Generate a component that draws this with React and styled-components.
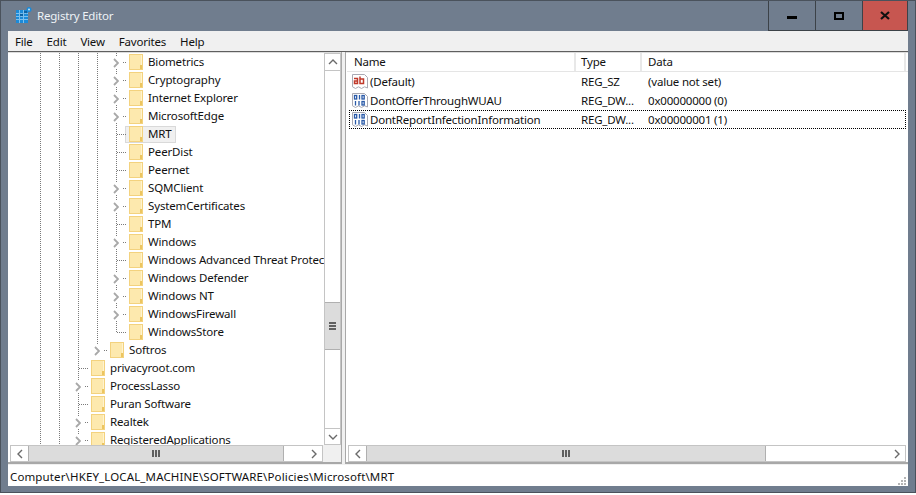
import React from 'react'
import styled, { createGlobalStyle } from 'styled-components'

const treeRows = [
  { label: 'Biometrics', depth: 4, expander: true },
  { label: 'Cryptography', depth: 4, expander: true },
  { label: 'Internet Explorer', depth: 4, expander: true },
  { label: 'MicrosoftEdge', depth: 4, expander: true },
  { label: 'MRT', depth: 4, selected: true },
  { label: 'PeerDist', depth: 4 },
  { label: 'Peernet', depth: 4 },
  { label: 'SQMClient', depth: 4, expander: true },
  { label: 'SystemCertificates', depth: 4, expander: true },
  { label: 'TPM', depth: 4 },
  { label: 'Windows', depth: 4, expander: true },
  { label: 'Windows Advanced Threat Protection', depth: 4 },
  { label: 'Windows Defender', depth: 4, expander: true },
  { label: 'Windows NT', depth: 4, expander: true },
  { label: 'WindowsFirewall', depth: 4, expander: true },
  { label: 'WindowsStore', depth: 4, last: true },
  { label: 'Softros', depth: 3, expander: true, last: true },
  { label: 'privacyroot.com', depth: 2 },
  { label: 'ProcessLasso', depth: 2, expander: true },
  { label: 'Puran Software', depth: 2 },
  { label: 'Realtek', depth: 2, expander: true },
  { label: 'RegisteredApplications', depth: 2, expander: true },
]

const values = [
  { name: '(Default)', kind: 'sz', type: 'REG_SZ', data: '(value not set)' },
  { name: 'DontOfferThroughWUAU', kind: 'bin', type: 'REG_DW...', data: '0x00000000 (0)' },
  { name: 'DontReportInfectionInformation', kind: 'bin', type: 'REG_DW...', data: '0x00000001 (1)', focused: true },
]

function Chevron({ dir, light }) {
  const points = {
    right: '1,1 5,5 1,9',
    left: '5,1 1,5 5,9',
    up: '1,5 5,1 9,5',
    down: '1,1 5,5 9,1',
  }
  const wide = dir === 'up' || dir === 'down'
  return (
    <svg width={wide ? 10 : 6} height={wide ? 6 : 10} viewBox={wide ? '0 0 10 6' : '0 0 6 10'}>
      <polyline
        points={points[dir]}
        fill="none"
        stroke={light ? '#a8a8a8' : '#6a6a6a'}
        strokeWidth={light ? 1.8 : 1.4}
      />
    </svg>
  )
}

function AppIcon() {
  return (
    <svg width="16" height="16" viewBox="0 0 16 16">
      <rect x="0" y="3" width="12" height="13" fill="#1b8ad8" />
      <path d="M3.500 3v13M7.500 3v13M0 6.500h12M0 9.500h12M0 12.500h12" stroke="#7cc0ee" strokeWidth="1" />
      <path d="M4 7l3 2M7 7l-3 2M8 4l3 2M11 4l-3 2" stroke="#0d5a96" strokeWidth="1" />
      <circle cx="13" cy="2.500" r="2.500" fill="#1b8ad8" />
      <circle cx="13" cy="2.500" r="1" fill="#bfe3f8" />
    </svg>
  )
}

function Folder() {
  return (
    <FolderIcon width="14" height="16" viewBox="0 0 14 16">
      <rect x="0" y="0" width="14" height="16" fill="#f3d27e" />
      <rect x="1" y="1" width="11" height="14" fill="#fde9ae" />
      <rect x="12" y="1" width="1" height="10" fill="#fff3cf" />
      <rect x="11" y="11" width="2" height="4" fill="#ecc560" />
    </FolderIcon>
  )
}

function ValueIcon({ kind }) {
  return (
    <ValueSvg width="16" height="16" viewBox="0 0 16 16">
      <path d="M0.500 0.500h12l3 3v10.500l-3-1.200-3 1.700-3-1.700-3 1.700-3-1.700z" fill="#fff" stroke="#a9a9b3" />
      {kind === 'sz' ? (
        <g fill="none" stroke="#c0392b" strokeWidth="1.500">
          <path d="M2 4.500h3.500v5h-3v-2.500h3" />
          <path d="M8 2.500v7h3.500v-4.500h-3.500" />
        </g>
      ) : (
        <g fill="none" stroke="#2a5aa8" strokeWidth="1.300">
          <rect x="2.500" y="2.500" width="2.200" height="3.500" />
          <path d="M7.500 2v4.500" />
          <rect x="10" y="2.500" width="2.200" height="3.500" />
          <path d="M3.500 8v4.500M7 8v4.500" />
          <rect x="10" y="8.500" width="2.200" height="3.500" />
        </g>
      )}
    </ValueSvg>
  )
}

function HBar({ thumb }) {
  return (
    <HScroll>
      <HButton><Chevron dir="left" /></HButton>
      <HTrack>
        <HThumb $w={thumb}><GripMark /></HThumb>
      </HTrack>
      <HButton><Chevron dir="right" /></HButton>
    </HScroll>
  )
}

function App() {
  return (
    <>
      <GlobalStyle />
      <Window>
        <TitleBar>
          <TitleLeft>
            <AppIcon />
            <Title>Registry Editor</Title>
          </TitleLeft>
          <Controls>
            <ControlButton><MinGlyph /></ControlButton>
            <ControlButton><MaxGlyph /></ControlButton>
            <CloseButton>
              <svg width="10" height="9" viewBox="0 0 10 9">
                <path d="M1 1l8 7M9 1l-8 7" stroke="#111" strokeWidth="2.200" />
              </svg>
            </CloseButton>
          </Controls>
        </TitleBar>
        <Client>
          <MenuBar>
            {['File', 'Edit', 'View', 'Favorites', 'Help'].map((m) => (
              <span key={m}>{m}</span>
            ))}
          </MenuBar>
          <Panes>
            <TreePane>
              <PaneBody>
                <TreeList>
                  {treeRows.map((row) => (
                    <TreeRow key={row.label}>
                      {Array.from({ length: row.depth }).map((_, i) => (
                        <Guide key={i} />
                      ))}
                      <Branch $last={row.last}>
                        <BranchTick />
                        {row.expander && (
                          <Expander><Chevron dir="right" light /></Expander>
                        )}
                      </Branch>
                      <TreeItem $selected={row.selected}>
                        <Folder />
                        <TreeLabel>{row.label}</TreeLabel>
                      </TreeItem>
                    </TreeRow>
                  ))}
                </TreeList>
                <VScroll>
                  <ScrollButton $h={18}><Chevron dir="up" /></ScrollButton>
                  <VTrack>
                    <VThumb><GripMark $vertical /></VThumb>
                  </VTrack>
                  <ScrollButton $h={17}><Chevron dir="down" /></ScrollButton>
                </VScroll>
              </PaneBody>
              <HScrollRow>
                <HBar thumb={256} />
                <Corner />
              </HScrollRow>
            </TreePane>
            <Splitter />
            <ListPane>
              <ListBody>
                <ListHeader>
                  <HeaderCell $w={229} $pad={7}>Name</HeaderCell>
                  <HeaderCell $w={66} $pad={5}>Type</HeaderCell>
                  <HeaderCell $w={264} $pad={6}>Data</HeaderCell>
                </ListHeader>
                {values.map((v) => (
                  <ValueRow key={v.name} $focused={v.focused}>
                    <NameCell>
                      <ValueIcon kind={v.kind} />
                      <ValueName>{v.name}</ValueName>
                    </NameCell>
                    <TypeCell>{v.type}</TypeCell>
                    <DataCell>{v.data}</DataCell>
                  </ValueRow>
                ))}
              </ListBody>
              <ListScrollRow>
                <HBar thumb={400} />
              </ListScrollRow>
            </ListPane>
          </Panes>
          <StatusBar>
            <StatusText>Computer\HKEY_LOCAL_MACHINE\SOFTWARE\Policies\Microsoft\MRT</StatusText>
            <ResizeGrip>
              <svg width="9" height="9" viewBox="0 0 9 9" fill="#b4b4b4">
                <rect x="6" y="0" width="2" height="2" />
                <rect x="3" y="3" width="2" height="2" />
                <rect x="6" y="3" width="2" height="2" />
                <rect x="0" y="6" width="2" height="2" />
                <rect x="3" y="6" width="2" height="2" />
                <rect x="6" y="6" width="2" height="2" />
              </svg>
            </ResizeGrip>
          </StatusBar>
        </Client>
      </Window>
    </>
  )
}

export default App

const dots = 'linear-gradient(#7a7a7a 50%, transparent 50%)'

const GlobalStyle = createGlobalStyle`
  html, body {
    margin: 0;
    padding: 0;
    background: #fff;
  }
  * {
    box-sizing: border-box;
  }
`

const Window = styled.div`
  width: 916px;
  height: 493px;
  display: flex;
  flex-direction: column;
  background: #707d8e;
  border: 1px solid #4a525c;
  padding: 0 7px 6px 7px;
  font-family: "Noto Sans", "Open Sans", sans-serif;
  font-size: 11.5px;
  letter-spacing: -0.2px;
  color: #111;
`

const TitleBar = styled.div`
  height: 30px;
  flex-shrink: 0;
  display: flex;
  justify-content: space-between;
  align-items: flex-start;
`

const TitleLeft = styled.div`
  display: flex;
  align-items: center;
  gap: 5px;
  padding: 6px 0 0 8px;
`

const Title = styled.span`
  color: #eef3f6;
`

const Controls = styled.div`
  display: flex;
  height: 30px;
  border: 1px solid #3c4248;
  border-top: none;
`

const ControlButton = styled.div`
  width: 47px;
  display: flex;
  align-items: center;
  justify-content: center;
  border-right: 1px solid #3c4248;
`

const CloseButton = styled.div`
  width: 44px;
  display: flex;
  align-items: center;
  justify-content: center;
  background: #c75650;
`

const MinGlyph = styled.div`
  width: 10px;
  height: 3px;
  margin-top: 3px;
  background: #000;
`

const MaxGlyph = styled.div`
  width: 10px;
  height: 8px;
  border: 2px solid #000;
`

const Client = styled.div`
  flex: 1;
  min-height: 0;
  display: flex;
  flex-direction: column;
  background: #f0f0f0;
`

const MenuBar = styled.div`
  height: 21px;
  flex-shrink: 0;
  display: flex;
  align-items: center;
  padding-left: 7px;
  gap: 14px;
  border-bottom: 1px solid #5f5f5f;
`

const Panes = styled.div`
  height: 412px;
  flex-shrink: 0;
  display: flex;
`

const TreePane = styled.div`
  width: 333px;
  flex-shrink: 0;
  display: flex;
  flex-direction: column;
  background: #fff;
  border-top: 1px solid #dcdcdc;
  border-bottom: 2px solid #a8a8a8;
`

const PaneBody = styled.div`
  flex: 1;
  min-height: 0;
  display: flex;
`

const TreeList = styled.div`
  flex: 1;
  min-width: 0;
  overflow: hidden;
  padding-left: 32px;
  letter-spacing: -0.15px;
`

const TreeRow = styled.div`
  height: 18px;
  display: flex;
  align-items: center;
  white-space: nowrap;
`

const Guide = styled.span`
  width: 19px;
  height: 18px;
  flex-shrink: 0;
  background: ${dots} 0 0 / 1px 2px repeat-y;
`

const Branch = styled.span`
  position: relative;
  width: 13px;
  height: 18px;
  flex-shrink: 0;
  background: ${(p) => (p.$last ? 'linear-gradient(#fff, #fff) 0 10px / 1px 8px no-repeat,' : '')} ${dots} 0 0 / 1px 2px repeat-y;
`

const BranchTick = styled.span`
  position: absolute;
  left: 1px;
  right: 2px;
  top: 9px;
  height: 1px;
  background: linear-gradient(90deg, #7a7a7a 50%, transparent 50%) 0 0 / 2px 1px repeat-x;
`

const Expander = styled.span`
  position: absolute;
  left: -3px;
  top: 4px;
  width: 10px;
  height: 11px;
  background: #fff;
  display: flex;
  align-items: center;
`

const TreeItem = styled.span`
  display: flex;
  align-items: center;
  flex-shrink: 0;
  height: 17px;
  margin-left: -4px;
  padding: 0 3px;
  border: 1px solid ${(p) => (p.$selected ? '#d9d9d9' : 'transparent')};
  background: ${(p) => (p.$selected ? '#f0f0f0' : 'transparent')};
`

const FolderIcon = styled.svg`
  flex-shrink: 0;
`

const TreeLabel = styled.span`
  margin: -2px 0 0 5px;
`

const VScroll = styled.div`
  width: 17px;
  flex-shrink: 0;
  display: flex;
  flex-direction: column;
  background: #fff;
  border-left: 1px solid #c4c4c4;
  border-right: 1px solid #c4c4c4;
`

const ScrollButton = styled.div`
  height: ${(p) => p.$h}px;
  flex-shrink: 0;
  display: flex;
  align-items: center;
  justify-content: center;
  border-top: 1px solid #c4c4c4;
  border-bottom: 1px solid #c4c4c4;
`

const VTrack = styled.div`
  flex: 1;
  padding-top: 231px;
`

const VThumb = styled.div`
  height: 48px;
  display: flex;
  align-items: center;
  justify-content: center;
  background: #dcdcdc;
  border-top: 1px solid #b0b0b0;
  border-bottom: 1px solid #b0b0b0;
`

const GripMark = styled.div`
  width: ${(p) => (p.$vertical ? 7 : 8)}px;
  height: ${(p) => (p.$vertical ? 8 : 7)}px;
  background: ${(p) =>
    p.$vertical
      ? 'repeating-linear-gradient(180deg, #606060 0 2px, transparent 2px 3px)'
      : 'repeating-linear-gradient(90deg, #606060 0 2px, transparent 2px 3px)'};
`

const HScrollRow = styled.div`
  display: flex;
  flex-shrink: 0;
  padding-left: 2px;
`

const ListScrollRow = styled.div`
  display: flex;
  flex-shrink: 0;
  padding: 0 2px;
`

const HScroll = styled.div`
  flex: 1;
  height: 17px;
  display: flex;
  border: 1px solid #c4c4c4;
  background: #fff;
`

const HButton = styled.div`
  width: 17px;
  flex-shrink: 0;
  display: flex;
  align-items: center;
  justify-content: center;
`

const HTrack = styled.div`
  flex: 1;
  min-width: 0;
  display: flex;
`

const HThumb = styled.div`
  width: ${(p) => p.$w}px;
  display: flex;
  align-items: center;
  justify-content: center;
  background: #dcdcdc;
  border-left: 1px solid #b0b0b0;
  border-right: 1px solid #b0b0b0;
`

const Corner = styled.div`
  width: 18px;
  background: #f0f0f0;
`

const Splitter = styled.div`
  width: 5px;
  flex-shrink: 0;
  background: #f0f0f0;
  border-left: 1px solid #a8a8a8;
  border-right: 1px solid #a8a8a8;
`

const ListPane = styled.div`
  flex: 1;
  min-width: 0;
  display: flex;
  flex-direction: column;
  background: #fff;
  border-top: 1px solid #dcdcdc;
  border-bottom: 2px solid #a8a8a8;
`

const ListBody = styled.div`
  flex: 1;
  min-height: 0;
  padding-left: 1px;
`

const ListHeader = styled.div`
  height: 19px;
  display: flex;
  border-bottom: 1px solid #e5e5e5;
`

const HeaderCell = styled.div`
  width: ${(p) => p.$w}px;
  padding-left: ${(p) => p.$pad}px;
  line-height: 18px;
  border-right: 2px solid #e8e8e8;
`

const ValueRow = styled.div`
  height: 19px;
  display: flex;
  align-items: center;
  margin-left: 2px;
  margin-right: 2px;
  border: 1px dotted ${(p) => (p.$focused ? '#000' : 'transparent')};
`

const NameCell = styled.div`
  width: 226px;
  flex-shrink: 0;
  padding-left: 2px;
  display: flex;
  align-items: center;
`

const ValueSvg = styled.svg`
  flex-shrink: 0;
`

const ValueName = styled.span`
  margin-left: 2px;
`

const TypeCell = styled.div`
  width: 66px;
  flex-shrink: 0;
  padding-left: 5px;
`

const DataCell = styled.div`
  padding-left: 6px;
`

const StatusBar = styled.div`
  flex: 1;
  min-height: 0;
  position: relative;
  margin-top: 1px;
  display: flex;
  align-items: center;
  padding: 2px 0 0 2px;
  background: #fff;
`

const StatusText = styled.span`
  letter-spacing: 0.13px;
`

const ResizeGrip = styled.div`
  position: absolute;
  right: 1px;
  bottom: 0;
  width: 9px;
  height: 9px;
  line-height: 0;
`
